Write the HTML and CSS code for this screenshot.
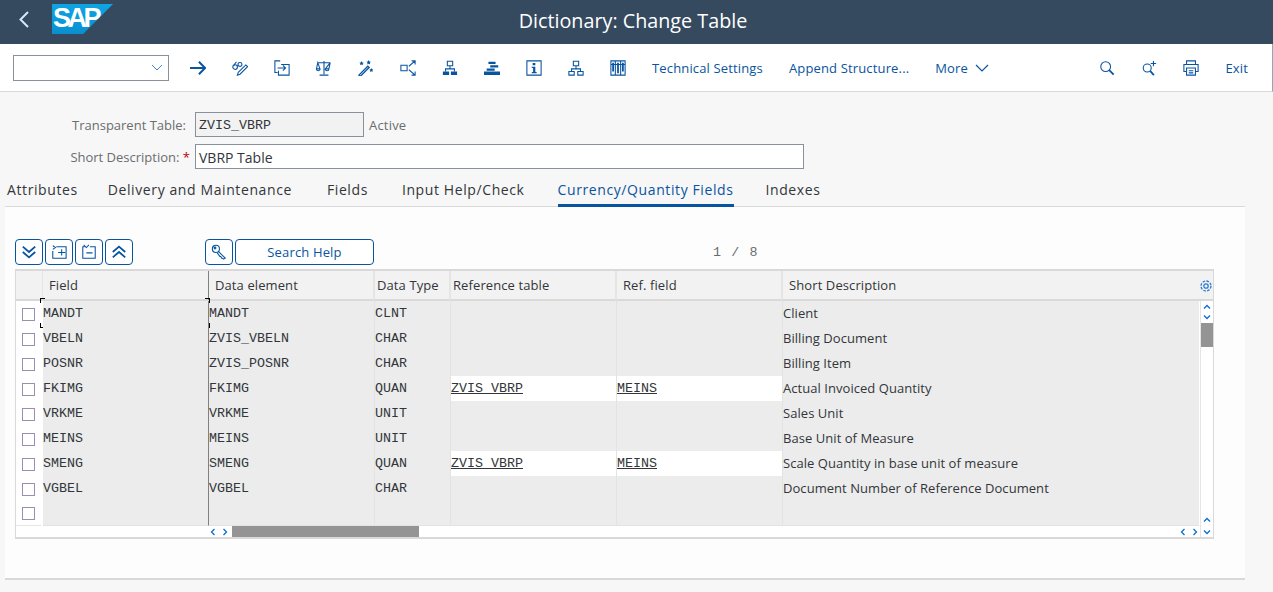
FILE: index.html
```html
<!DOCTYPE html>
<html lang="en">
	<head>
		<meta charset="UTF-8">
		<title>Dictionary: Change Table</title>
		<link rel="stylesheet" href="styles.css">
	</head>
	<body>
		<header class="shell">
			<svg class="shell-back" width="12" height="18" viewBox="0 0 12 18"><path d="M10 2 2.500 9.500l7.500 7.500" fill="none" stroke="#d1e8ff" stroke-width="2"/></svg>
			<div class="logo"><span>SAP</span></div>
			<h1 class="shell-title">Dictionary: Change Table</h1>
		</header>

		<div class="toolbar">
			<div class="combo">
				<svg width="12" height="8" viewBox="0 0 12 8"><path d="M1 1l5 5 5-5" fill="none" stroke="#3f86d0" stroke-width="1"/></svg>
			</div>
			<div class="tool-icons">
				<svg class="ico" viewBox="0 0 18 18"><path d="M0 9h17M10 2l7 7-7 7" stroke-width="2.200"/></svg>
				<svg class="ico" viewBox="0 0 18 18"><circle cx="3.500" cy="8" r="2.600"/><circle cx="9" cy="5" r="2.200"/><path d="M6 7l1-1M2 6l3-4M7 14 15.500 5.500l2 2L9 16l-3 1z"/></svg>
				<svg class="ico" viewBox="0 0 18 18"><path d="M7 1H1v13h3M8 5h9v12H5v-5M4 9h9M10 6l3 3-3 3"/></svg>
				<svg class="ico" viewBox="0 0 18 18"><path d="M9 1v15M4 17h10M2 3h14M2 3 0.500 10h4zM16 3l-1.500 7h-4zM0.500 10a2 2 0 0 0 4 0M10.500 10a2 2 0 0 0 4 0"/></svg>
				<svg class="ico" viewBox="0 0 18 18"><path d="M1 17 11 7l1.500 1.500-10 10z" stroke-width="1.500"/><path class="fill" d="M4 1l.8 1.700 1.700.3-1.200 1.200.3 1.800L4 5.200l-1.600.8.300-1.800L1.500 3l1.700-.3zM12 0l.8 1.700 1.700.3-1.200 1.200.3 1.800-1.600-.8-1.600.8.300-1.800L9.500 2l1.700-.3zM15 9l.7 1.500 1.600.2-1.100 1.100.3 1.600-1.500-.7-1.500.7.300-1.600-1.100-1.100 1.600-.2z"/></svg>
				<svg class="ico" viewBox="0 0 18 18"><path d="M1 6h7v6H1zM10 7l7-6M13 1h4v4M10 11l7 6M13 17h4v-4"/></svg>
				<svg class="ico" viewBox="0 0 18 18"><path d="M6 1.500h6v5H6zM9 6.500V10M4 13v-3h10v3"/><path class="fill" d="M1 13h7v4H1zM10 13h7v4h-7z"/></svg>
				<svg class="ico" viewBox="0 0 18 18"><path class="fill" d="M5 2h8v2.500H5zM7 6h9v2.500H7zM3 9.500h9V12H3zM0 13h18v4H0z"/></svg>
				<svg class="ico" viewBox="0 0 18 18"><path d="M1 1h16v16H1z"/><path class="fill" d="M7.500 3.500h3V6h-3zM6.500 7.500h4v6H12V15H6.500v-1.500H8v-4.500H6.500z"/></svg>
				<svg class="ico" viewBox="0 0 18 18"><path d="M6 1.500h6v5H6zM9 6.500V10M4 13v-3h10v3M1 13h6v4H1zM11 13h6v4h-6z"/></svg>
				<svg class="ico" viewBox="0 0 18 18"><path d="M1 1h16v16H1zM1 5h16M6 1v16M12 1v16"/><path class="fill" d="M2.500 3h2v10h-2zM8 3h2v12H8zM13.500 3h2v10h-2z"/></svg>
			</div>
			<div class="tool-links">
				<a class="tool-link link-tech">Technical Settings</a>
				<a class="tool-link link-append">Append Structure...</a>
				<a class="tool-link link-more">More
					<svg width="14" height="8" viewBox="0 0 14 8"><path d="M1 1l6 6 6-6" fill="none" stroke="#0854a0" stroke-width="1.200"/></svg>
				</a>
			</div>
			<div class="tool-right">
				<svg class="ico" viewBox="0 0 18 18"><circle cx="7.500" cy="7.500" r="5.500"/><path d="M11.500 11.500 16.500 16.500" stroke-width="2"/></svg>
				<svg class="ico" viewBox="0 0 18 18"><circle cx="7" cy="9" r="4.500"/><path d="M10.500 12.500 14.500 17" stroke-width="2"/><path d="M14 1v6M11 4h6"/></svg>
				<svg class="ico" viewBox="0 0 18 18"><path d="M4 5V1h10v4M4 13H1V5h16v8h-3M4 9h10v8H4zM6.500 12h5M6.500 14.500h5"/></svg>
				<a class="tool-link tool-exit">Exit</a>
			</div>
		</div>

		<main class="page">
			<div class="form-row">
				<label class="form-label">Transparent Table:</label>
				<div class="input input-ro mono">ZVIS_VBRP</div>
				<span class="status">Active</span>
			</div>
			<div class="form-row">
				<label class="form-label label-req">Short Description: <b class="req">*</b></label>
				<div class="input input-desc">VBRP Table</div>
			</div>

			<nav class="tabs">
				<a class="tab tab-1">Attributes</a>
				<a class="tab tab-2">Delivery and Maintenance</a>
				<a class="tab tab-3">Fields</a>
				<a class="tab tab-4">Input Help/Check</a>
				<a class="tab tab-5 tab-on">Currency/Quantity Fields</a>
				<a class="tab">Indexes</a>
			</nav>

			<section class="panel">
				<div class="grid-tools">
					<div class="btn-group">
						<button class="btn"><svg class="ico ico-b" viewBox="0 0 18 18"><path d="M2 3l7 6 7-6M2 9l7 6 7-6" stroke-width="2"/></svg></button>
						<button class="btn"><svg class="ico" viewBox="0 0 18 18"><path d="M6 3h11v13H2V8M2 2l3 2-3 2M12 6v7M8 9.500h8"/></svg></button>
						<button class="btn"><svg class="ico" viewBox="0 0 18 18"><path d="M10 3h6v13H2V3h2M3 1l3 3 3-3M6 10h7"/></svg></button>
						<button class="btn"><svg class="ico ico-b" viewBox="0 0 18 18"><path d="M2 9l7-6 7 6M2 15l7-6 7 6" stroke-width="2"/></svg></button>
					</div>
					<div class="btn-group group-search">
						<button class="btn"><svg class="ico" viewBox="0 0 18 18"><circle cx="5.500" cy="5.500" r="4"/><circle cx="4.500" cy="4.500" r="1"/><path d="M8 8l8 8-2 1-1-1-1 0-1-2-1 0-3-4"/></svg></button>
						<button class="btn btn-text">Search Help</button>
					</div>
					<span class="pager mono">1 / 8</span>
				</div>

				<div class="grid">
					<div class="grid-head">
						<div class="hcell hcell-sel"></div>
						<div class="hcell hcell-field">Field</div>
						<div class="hcell hcell-de">Data element</div>
						<div class="hcell">Data Type</div>
						<div class="hcell">Reference table</div>
						<div class="hcell hcell-ref">Ref. field</div>
						<div class="hcell hcell-desc">Short Description
							<svg class="gear" viewBox="0 0 14 14"><circle cx="7" cy="7" r="2.200"/><circle cx="7" cy="7" r="5" stroke-dasharray="2.600 1.300"/></svg>
						</div>
					</div>
					<div class="grid-body">
						<div class="grid-main">
							<div class="grow">
								<div class="cell-sel"><i class="check"></i></div>
								<div class="cell cell-field mono cell-focus">MANDT</div>
								<div class="cell cell-de mono">MANDT</div>
								<div class="cell mono">CLNT</div>
								<div class="cell"></div>
								<div class="cell"></div>
								<div class="cell cell-txt">Client</div>
							</div>
							<div class="grow">
								<div class="cell-sel"><i class="check"></i></div>
								<div class="cell cell-field mono">VBELN</div>
								<div class="cell cell-de mono">ZVIS_VBELN</div>
								<div class="cell mono">CHAR</div>
								<div class="cell"></div>
								<div class="cell"></div>
								<div class="cell cell-txt">Billing Document</div>
							</div>
							<div class="grow">
								<div class="cell-sel"><i class="check"></i></div>
								<div class="cell cell-field mono">POSNR</div>
								<div class="cell cell-de mono">ZVIS_POSNR</div>
								<div class="cell mono">CHAR</div>
								<div class="cell"></div>
								<div class="cell"></div>
								<div class="cell cell-txt">Billing Item</div>
							</div>
							<div class="grow">
								<div class="cell-sel"><i class="check"></i></div>
								<div class="cell cell-field mono">FKIMG</div>
								<div class="cell cell-de mono">FKIMG</div>
								<div class="cell mono">QUAN</div>
								<div class="cell cell-edit mono">ZVIS_VBRP</div>
								<div class="cell cell-edit mono">MEINS</div>
								<div class="cell cell-txt">Actual Invoiced Quantity</div>
							</div>
							<div class="grow">
								<div class="cell-sel"><i class="check"></i></div>
								<div class="cell cell-field mono">VRKME</div>
								<div class="cell cell-de mono">VRKME</div>
								<div class="cell mono">UNIT</div>
								<div class="cell"></div>
								<div class="cell"></div>
								<div class="cell cell-txt">Sales Unit</div>
							</div>
							<div class="grow">
								<div class="cell-sel"><i class="check"></i></div>
								<div class="cell cell-field mono">MEINS</div>
								<div class="cell cell-de mono">MEINS</div>
								<div class="cell mono">UNIT</div>
								<div class="cell"></div>
								<div class="cell"></div>
								<div class="cell cell-txt">Base Unit of Measure</div>
							</div>
							<div class="grow">
								<div class="cell-sel"><i class="check"></i></div>
								<div class="cell cell-field mono">SMENG</div>
								<div class="cell cell-de mono">SMENG</div>
								<div class="cell mono">QUAN</div>
								<div class="cell cell-edit mono">ZVIS_VBRP</div>
								<div class="cell cell-edit mono">MEINS</div>
								<div class="cell cell-txt">Scale Quantity in base unit of measure</div>
							</div>
							<div class="grow">
								<div class="cell-sel"><i class="check"></i></div>
								<div class="cell cell-field mono">VGBEL</div>
								<div class="cell cell-de mono">VGBEL</div>
								<div class="cell mono">CHAR</div>
								<div class="cell"></div>
								<div class="cell"></div>
								<div class="cell cell-txt">Document Number of Reference Document</div>
							</div>
							<div class="grow">
								<div class="cell-sel"><i class="check"></i></div>
								<div class="cell cell-field mono"></div>
								<div class="cell cell-de mono"></div>
								<div class="cell mono"></div>
								<div class="cell"></div>
								<div class="cell"></div>
								<div class="cell cell-txt"></div>
							</div>
							<div class="hscroll">
								<svg class="arrow arrow-first" viewBox="0 0 8 8"><path d="M5.500 1 2.500 4l3 3"/></svg>
								<svg class="arrow" viewBox="0 0 8 8"><path d="M2.500 1l3 3-3 3"/></svg>
								<div class="hthumb"></div>
								<svg class="arrow arrow-end" viewBox="0 0 8 8"><path d="M5.500 1 2.500 4l3 3"/></svg>
								<svg class="arrow arrow-last" viewBox="0 0 8 8"><path d="M2.500 1l3 3-3 3"/></svg>
							</div>
						</div>
						<div class="vscroll">
							<svg class="arrow" viewBox="0 0 8 8"><path d="M1 5.500l3-3 3 3"/></svg>
							<svg class="arrow" viewBox="0 0 8 8"><path d="M1 2.500l3 3 3-3"/></svg>
							<div class="vthumb"></div>
							<svg class="arrow arrow-vend" viewBox="0 0 8 8"><path d="M1 5.500l3-3 3 3"/></svg>
							<svg class="arrow" viewBox="0 0 8 8"><path d="M1 2.500l3 3 3-3"/></svg>
						</div>
					</div>
				</div>
			</section>
		</main>
	</body>
</html>
```

FILE: styles.css
```css
* {
	margin: 0;
	padding: 0;
	box-sizing: border-box;
}

html, body {
	height: 592px;
	overflow: hidden;
}

body {
	background-color: #f7f7f7;
	font-family: "Open Sans", "Noto Sans", sans-serif;
	font-size: 13px;
	color: #32363a;
}

.mono {
	font-family: "Liberation Mono", monospace;
	font-size: 13.33px;
}

.ico {
	width: 16px;
	height: 16px;
	fill: none;
	stroke: #0854a0;
	stroke-width: 1.2;
	flex: none;
}

.ico .fill {
	fill: #0854a0;
	stroke: none;
}

/* shell bar */
.shell {
	height: 44px;
	background-color: #354a5f;
	display: flex;
	align-items: flex-start;
	position: relative;
}

.shell-back {
	margin: 10px 0 0 18px;
}

.logo {
	width: 61px;
	height: 30px;
	margin: 4px 0 0 22px;
	background: linear-gradient(#0ea5e4, #0a8fd0);
	clip-path: polygon(0 0, 100% 0, 51% 100%, 0 100%);
	color: #fff;
	font-family: "Liberation Sans", sans-serif;
	font-weight: bold;
	font-size: 27px;
	line-height: 28px;
	letter-spacing: -3.5px;
	padding-left: 1px;
}

.shell-title {
	position: absolute;
	left: 0;
	right: 7px;
	top: 9px;
	text-align: center;
	font-size: 19.75px;
	font-weight: normal;
	line-height: 24px;
	color: #fff;
}

/* toolbar */
.toolbar {
	height: 48px;
	background-color: #fff;
	border-bottom: 1px solid #d9d9d9;
	border-right: 1px solid #8fa6bd;
	display: flex;
	align-items: center;
	padding: 0 0 0 13px;
}

.combo {
	width: 156px;
	height: 26px;
	background-color: #fff;
	border: 1px solid #89919a;
	display: flex;
	align-items: center;
	justify-content: flex-end;
	padding-right: 5px;
}

.tool-icons {
	display: flex;
	gap: 26px;
	margin-left: 21px;
}

.tool-links {
	display: flex;
	align-items: center;
}

.tool-link {
	color: #0854a0;
	font-size: 13px;
	letter-spacing: 0.15px;
	white-space: nowrap;
}

.link-tech {
	margin-left: 26px;
}

.link-append {
	margin-left: 26px;
}

.link-more {
	margin-left: 26px;
	display: flex;
	align-items: center;
	gap: 7px;
}

.tool-right {
	display: flex;
	align-items: center;
	gap: 26px;
	margin-left: auto;
	padding-right: 24px;
}

/* form */
.page {
	padding-top: 20px;
}

.form-row {
	display: flex;
	align-items: center;
	height: 25px;
	margin-bottom: 7px;
}

.form-label {
	width: 195px;
	padding-right: 9px;
	text-align: right;
	color: #6a6d70;
}

.label-req {
	padding-right: 5px;
}

.req {
	color: #bb0000;
	font-weight: normal;
}

.input {
	height: 25px;
	line-height: 25px;
	border: 1px solid #89919a;
	padding-left: 3px;
	background-color: #fff;
	font-size: 14px;
}

.input-ro {
	width: 169px;
	background-color: #f2f2f2;
	font-size: 13.33px;
	line-height: 25px;
}

.input-desc {
	width: 609px;
}

.status {
	margin-left: 5px;
	color: #6a6d70;
	letter-spacing: 0.2px;
}

/* tabs */
.tabs {
	display: flex;
	height: 32px;
	margin-left: 5px;
	margin-top: -1px;
	width: 1240px;
	padding-left: 2px;
	border-bottom: 1px solid #d9d9d9;
}

.tab {
	font-size: 14px;
	letter-spacing: 0.6px;
	line-height: 30px;
	height: 32px;
	color: #32363a;
	white-space: nowrap;
}

.tab-1 { margin-right: 30px; }
.tab-2 { margin-right: 35px; }
.tab-3 { margin-right: 34px; }
.tab-4 { margin-right: 33px; }
.tab-5 { margin-right: 32px; }

.tab-on {
	color: #0854a0;
	border-bottom: 3px solid #0854a0;
}

/* panel */
.panel {
	margin-left: 5px;
	width: 1240px;
	height: 373px;
	background-color: #fdfdfd;
	border-bottom: 2px solid #d9d9d9;
	padding: 32px 0 0 10px;
}

.grid-tools {
	display: flex;
	align-items: center;
	height: 26px;
	margin-bottom: 4px;
}

.btn-group {
	display: flex;
	gap: 2px;
}

.group-search {
	margin-left: 72px;
}

.btn {
	width: 28px;
	height: 26px;
	background-color: #fff;
	border: 1px solid #0854a0;
	border-radius: 4px;
	display: flex;
	align-items: center;
	justify-content: center;
}

.btn .ico-b {
	stroke-width: 2;
}

.btn-text {
	width: 139px;
	color: #0854a0;
	font-family: "Open Sans", "Noto Sans", sans-serif;
	font-size: 13px;
	letter-spacing: 0.15px;
}

.pager {
	margin-left: 339px;
	color: #6a6d70;
	letter-spacing: 1.1px;
	white-space: pre;
}

/* table */
.grid {
	width: 1199px;
	height: 270px;
	border: 1px solid #d9d9d9;
	border-width: 0 1px 2px 1px;
	background-color: #fff;
}

.grid-head {
	display: grid;
	grid-template-columns: 27px 166px 166px 76px 166px 166px 1fr;
	height: 32px;
	background-color: #f2f2f2;
	border-top: 2px solid #d9d9d9;
	border-bottom: 2px solid #d9d9d9;
}

.hcell {
	line-height: 29px;
	letter-spacing: 0.1px;
	padding-left: 2px;
	border-right: 2px solid #e5e5e5;
	white-space: nowrap;
}

.hcell-sel {
	border-right-width: 1px;
}

.hcell-field {
	padding-left: 6px;
	border-right: 1px solid #808080;
}

.hcell-de,
.hcell-ref {
	padding-left: 6px;
}

.hcell-desc {
	display: flex;
	justify-content: space-between;
	align-items: center;
	padding-left: 6px;
	border-right: 0;
}

.gear {
	width: 14px;
	height: 14px;
	fill: none;
	stroke: #2b7cd3;
	stroke-width: 1.3;
}

.grid-body {
	display: flex;
}

.grid-main {
	width: 1183px;
}

.grow {
	display: grid;
	grid-template-columns: 27px 166px 166px 76px 166px 166px 416px;
	height: 25px;
}

.cell-sel {
	background-color: #fff;
	border-bottom: 1px solid #e5e5e5;
	display: flex;
	align-items: center;
	padding-left: 6px;
	margin-right: 2px;
}

.check {
	display: block;
	width: 13px;
	height: 13px;
	background-color: #fff;
	border: 1px solid #9a8fb0;
}

.cell {
	background-color: #ececec;
	border-right: 1px solid #e3e3e3;
	border-bottom: 1px solid #e3e3e3;
	line-height: 25px;
	white-space: nowrap;
}

.cell.mono {
	line-height: 26px;
}

.cell-field {
	border-right: 1px solid #808080;
	position: relative;
}

.cell-txt {
	border-right: 0;
	font-size: 13px;
	letter-spacing: 0.05px;
}

.cell-edit {
	background-color: #fff;
	text-decoration: underline;
}

/* the four corners round the focused cell */
.cell-focus::before {
	content: "";
	position: absolute;
	left: -3px;
	top: -3px;
	right: -2px;
	bottom: -1px;
	background:
		linear-gradient(#000, #000) 0 0 / 5px 1px no-repeat,
		linear-gradient(#000, #000) 0 0 / 1px 5px no-repeat,
		linear-gradient(#000, #000) 100% 0 / 5px 1px no-repeat,
		linear-gradient(#000, #000) 100% 0 / 1px 5px no-repeat,
		linear-gradient(#000, #000) 0 100% / 5px 1px no-repeat,
		linear-gradient(#000, #000) 0 100% / 1px 5px no-repeat,
		linear-gradient(#000, #000) 100% 100% / 5px 1px no-repeat,
		linear-gradient(#000, #000) 100% 100% / 1px 5px no-repeat;
}

.hscroll {
	display: flex;
	align-items: center;
	height: 11px;
	padding-left: 193px;
	background-color: #fff;
}

.arrow {
	width: 8px;
	height: 8px;
	fill: none;
	stroke: #0a6ed1;
	stroke-width: 1.3;
	flex: none;
}

.arrow-first {
	margin-right: 4px;
}

.hthumb {
	width: 187px;
	height: 11px;
	margin-left: 3px;
	background-color: #949494;
}

.arrow-end {
	margin-left: auto;
	margin-right: 4px;
}

.arrow-last {
	margin-right: 0;
}

.vscroll {
	width: 14px;
	margin-left: 1px;
	height: 236px;
	border-left: 1px solid #e5e5e5;
	display: flex;
	flex-direction: column;
	align-items: center;
	padding: 2px 0 1px;
	gap: 2px;
	background-color: #fff;
}

.vthumb {
	width: 12px;
	height: 24px;
	background-color: #949494;
}

.arrow-vend {
	margin-top: auto;
	margin-bottom: 2px;
}
```
